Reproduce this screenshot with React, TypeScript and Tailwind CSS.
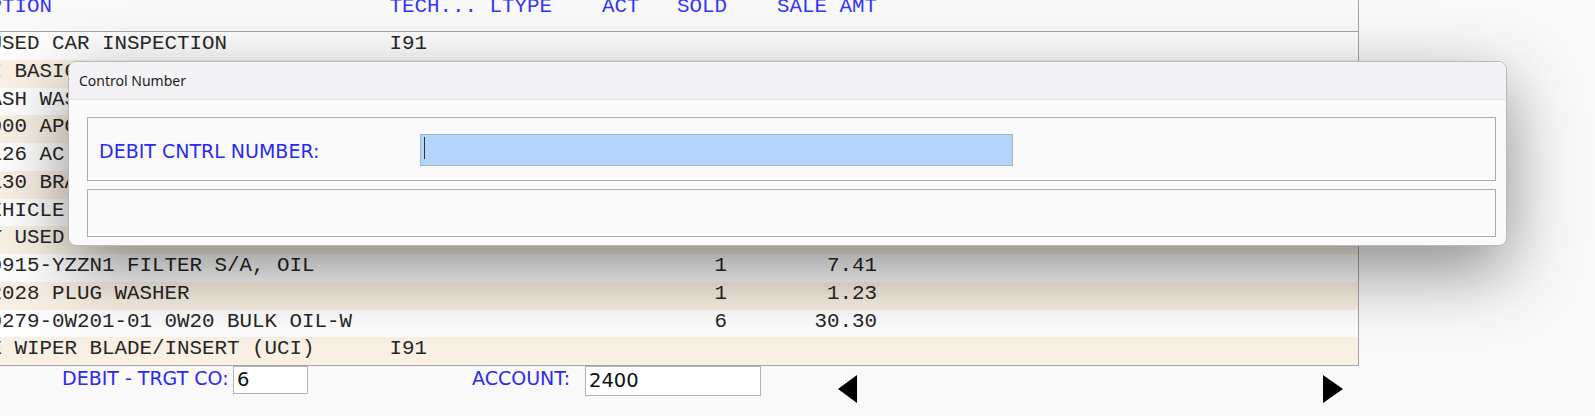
import React from "react";

const MONO = { fontFamily: '"Liberation Mono", "Courier New", monospace' };

function row(desc: string, tech = "", sold = "", amt = "") {
  let s = desc.padEnd(32) + tech;
  if (sold) s = s.padEnd(59 - sold.length) + sold;
  if (amt) s = s.padEnd(71 - amt.length) + amt;
  return s;
}

const HEADER = "PTION".padEnd(32) + "TECH... LTYPE    ACT   SOLD    SALE AMT";

const ROWS = [
  row("USED CAR INSPECTION", "I91"),
  row("I BASIC SERVICE"),
  row("ASH WASH"),
  row("000 APO FILTER"),
  row("126 AC FILTER"),
  row("130 BRAKE FLUID"),
  row("EHICLE SAFETY CHECK"),
  row("T USED CAR RECON"),
  row("0915-YZZN1 FILTER S/A, OIL", "", "1", "7.41"),
  row("2028 PLUG WASHER", "", "1", "1.23"),
  row("0279-0W201-01 0W20 BULK OIL-W", "", "6", "30.30"),
  row("E WIPER BLADE/INSERT (UCI)", "I91"),
];

const SANS = { fontFamily: '"DejaVu Sans", Verdana, sans-serif' };

export default function App() {
  return (
    <div className="relative h-[416px] w-[1595px] overflow-hidden bg-[#f9f9f9]">
      {/* table */}
      <div className="w-[1359px] border-r border-b border-[#a3a3ab]">
        <div className="h-[32px] overflow-hidden border-b border-[#a3a3ab]">
          <div
            className="-ml-[10.5px] whitespace-pre text-[20.833px] leading-[13px] text-[#3434f4]"
            style={MONO}
          >
            {HEADER}
          </div>
        </div>
        {ROWS.map((r, i) => (
          <div
            key={i}
            className={
              "h-[27.75px] overflow-hidden " +
              (i % 2 === 1 ? "bg-[#f8f0e3]" : "bg-[#fdfdfd]")
            }
          >
            <div
              className="-ml-[10.5px] whitespace-pre text-[20.833px] leading-[23px] text-[#262626]"
              style={MONO}
            >
              {r}
            </div>
          </div>
        ))}
      </div>

      {/* bottom bar */}
      <div className="flex items-start text-[19px]" style={SANS}>
        <div className="ml-[62px] mt-[1px] w-[171px] whitespace-nowrap leading-[22px] text-[#2a2af0]">
          DEBIT - TRGT CO:
        </div>
        <div className="flex h-[28px] w-[75px] items-center border border-[#b4b4b4] bg-white pl-[3px] text-[19.5px] leading-[22px] text-[#111]">
          6
        </div>
        <div className="ml-[164px] mt-[1px] w-[113px] whitespace-nowrap leading-[22px] text-[#2a2af0]">
          ACCOUNT:
        </div>
        <div className="flex h-[30px] w-[176px] items-center border border-[#b4b4b4] bg-white pl-[3px] text-[19.5px] leading-[22px] text-[#111]">
          2400
        </div>
        <svg className="ml-[77px] mt-[9px]" width="19" height="28" viewBox="0 0 19 28">
          <polygon points="19,0 0,14 19,28" fill="#000" />
        </svg>
        <svg className="ml-[466px] mt-[9px]" width="20" height="28" viewBox="0 0 20 28">
          <polygon points="0,0 20,14 0,28" fill="#000" />
        </svg>
      </div>

      {/* dialog */}
      <div className="absolute left-[68px] top-[61px] flex h-[185px] w-[1439px] flex-col overflow-hidden rounded-[8px] border border-[#b9b9bd] bg-[#fafafa] shadow-[0_24px_70px_rgba(0,0,0,0.45)]">
        <div
          className="flex h-[38px] shrink-0 items-center border-b border-[#e2e2e4] bg-[#f3f3f5] pl-[10px] text-[14px] text-[#1b1b1b]"
          style={{ fontFamily: '"Noto Sans", "Segoe UI", sans-serif' }}
        >
          Control Number
        </div>
        <div className="flex flex-col pl-[18px] pr-[10px] pt-[17px]">
          <div className="flex h-[64px] items-center border border-[#ababab] pl-[11px]" style={SANS}>
            <div className="mt-[3px] w-[321px] whitespace-nowrap text-[19px] leading-[22px] text-[#2a2af0]">
              DEBIT CNTRL NUMBER:
            </div>
            <div className="mt-[1px] flex h-[32px] w-[593px] items-start border border-[#a9b4c0] bg-[#b3d4fc] pl-[3px] pt-[2px]">
              <div className="h-[22px] w-[1px] bg-[#333]" />
            </div>
          </div>
          <div className="mt-[8px] h-[48px] border border-[#ababab]" />
        </div>
      </div>
    </div>
  );
}
